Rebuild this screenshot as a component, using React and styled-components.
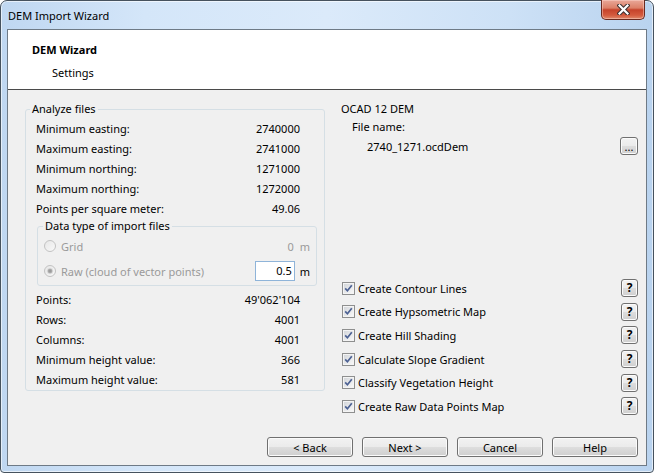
import React from 'react';
import styled, { createGlobalStyle } from 'styled-components';

const GlobalStyle = createGlobalStyle`
  html, body { margin: 0; padding: 0; background: #ffffff; }
  body {
    font-family: "Noto Sans", "Open Sans", "DejaVu Sans", sans-serif;
    font-size: 11px;
    color: #000;
  }
  * { box-sizing: border-box; }
`;

const Window = styled.div`
  width: 654px;
  height: 473px;
  display: flex;
  flex-direction: column;
  border: 1px solid #46525e;
  border-radius: 7px 7px 4px 4px;
  padding: 0 6px 6px 6px;
  background: linear-gradient(90deg, #bfd7f1 0%, #d4e6f9 22%, #dbeafa 50%, #cde1f6 78%, #b9d3ef 100%);
  box-shadow: inset 0 0 0 1px rgba(255, 255, 255, 0.6);
`;

const TitleBar = styled.div`
  height: 28px;
  flex: none;
  display: flex;
  margin: 0 -6px 0 -6px;
  padding: 0 8px 0 7px;
`;

const TitleText = styled.div`
  flex: 1;
  align-self: center;
  font-size: 11px;
  line-height: 16px;
  padding-top: 2px;
`;

const CloseButton = styled.div`
  width: 44px;
  height: 20px;
  margin-top: -1px;
  display: flex;
  align-items: center;
  justify-content: center;
  border: 1px solid #6a2a20;
  border-top: none;
  border-radius: 0 0 5px 5px;
  background: linear-gradient(180deg, #e9a899 0%, #dc8068 42%, #c6432b 52%, #d45a3e 80%, #e08a6c 100%);
  box-shadow: inset 0 0 0 1px rgba(255, 220, 210, 0.45);
`;

const Client = styled.div`
  flex: 1;
  display: flex;
  flex-direction: column;
  background: #f0f0f0;
  border: 1px solid #6e7a86;
  min-height: 0;
`;

const Header = styled.div`
  height: 60px;
  flex: none;
  background: #ffffff;
  border-bottom: 1px solid #4a4a4a;
  padding: 12px 0 0 24px;
`;

const HeaderTitle = styled.div`
  font-weight: bold;
  line-height: 16px;
`;

const HeaderSub = styled.div`
  margin-top: 7px;
  padding-left: 20px;
  line-height: 16px;
`;

const Body = styled.div`
  flex: 1;
  display: grid;
  grid-template-columns: 300px 1fr;
  column-gap: 16px;
  padding: 11px 8px 4px 17px;
  min-height: 0;
`;

const Group = styled.fieldset`
  margin: 0;
  padding: 1px 0 1px 0;
  border: 1px solid #d5dfe5;
  border-radius: 3px;
  min-width: 0;
  align-self: start;
`;

const Legend = styled.legend`
  padding: 0 2px;
  margin-left: ${p => p.$inset}px;
  line-height: 16px;
  color: #000;
`;

const InnerGroup = styled.fieldset`
  margin: 0 7px 0 11px;
  padding: 2px 6px 3px 6px;
  border: 1px solid #d5dfe5;
  border-radius: 3px;
  min-width: 0;
`;

const InfoRow = styled.div`
  height: 20px;
  display: flex;
  align-items: center;
  justify-content: space-between;
  padding: 0 24px 0 10px;
  margin-top: ${p => p.$gap || 0}px;
`;

const RadioRow = styled.div`
  height: ${p => p.$h}px;
  margin-top: ${p => p.$gap || 0}px;
  display: grid;
  grid-template-columns: 1fr 40px auto;
  column-gap: 5px;
  align-items: center;
  color: #9a9a9a;
`;

const RadioLabel = styled.div`
  display: flex;
  align-items: center;
  gap: 5px;
`;

const StaticValue = styled.div`
  text-align: right;
  padding-right: 1px;
`;

const Unit = styled.div`
  color: ${p => (p.$disabled ? '#9a9a9a' : '#000')};
`;

const NumberInput = styled.div`
  height: 20px;
  border: 1px solid #8fb4d9;
  background: #fff;
  color: #000;
  text-align: right;
  padding-right: 2px;
  line-height: 18px;
`;

const RightCol = styled.div`
  display: flex;
  flex-direction: column;
  min-height: 0;
`;

const SectionTitle = styled.div`
  line-height: 16px;
`;

const FieldLabel = styled.div`
  line-height: 20px;
  padding-left: 11px;
`;

const FileRow = styled.div`
  height: 18px;
  display: flex;
  align-items: center;
  justify-content: space-between;
  padding-left: 26px;
`;

const WinButton = styled.div`
  display: flex;
  align-items: center;
  justify-content: center;
  width: ${p => p.$w}px;
  height: ${p => p.$h}px;
  border: 1px solid #707070;
  border-radius: 3px;
  background: linear-gradient(180deg, #f2f2f2 0%, #ebebeb 48%, #dddddd 52%, #cfcfcf 100%);
  box-shadow: inset 0 0 0 1px #fbfbfb;
  font-weight: ${p => (p.$bold ? 'bold' : 'normal')};
  font-size: ${p => (p.$bold ? 12 : 11)}px;
  line-height: 1;
  color: #000;
`;

const CheckList = styled.div`
  margin-top: auto;
  display: flex;
  flex-direction: column;
`;

const CheckRow = styled.div`
  height: 23.6px;
  display: flex;
  align-items: center;
  justify-content: space-between;
`;

const CheckLabel = styled.div`
  display: flex;
  align-items: center;
  gap: 3px;
  padding-left: 1px;
`;

const Footer = styled.div`
  flex: none;
  display: flex;
  justify-content: flex-end;
  gap: 9px;
  padding: 15px 8px 8px 8px;
`;

const CloseGlyph = () => (
  <svg width="13" height="11" viewBox="0 0 13 11">
    <path d="M2.5 1.5 L10.5 9.5 M10.5 1.5 L2.5 9.5" stroke="#3b3030" strokeWidth="4.2" strokeLinecap="square" />
    <path d="M2.5 1.5 L10.5 9.5 M10.5 1.5 L2.5 9.5" stroke="#ffffff" strokeWidth="2.2" strokeLinecap="square" />
  </svg>
);

const Radio = ({ checked }) => (
  <svg width="12" height="12" viewBox="0 0 12 12">
    <defs>
      <linearGradient id={checked ? 'rfOn' : 'rfOff'} x1="0" y1="0" x2="1" y2="1">
        <stop offset="0" stopColor="#e6e6e6" />
        <stop offset="1" stopColor="#fafafa" />
      </linearGradient>
    </defs>
    <circle cx="6" cy="6" r="5.5" fill={`url(#${checked ? 'rfOn' : 'rfOff'})`} stroke="#c2c2c2" />
    {checked && <circle cx="6" cy="6" r="3" fill="#bdbdbd" stroke="#e4e4e4" strokeWidth="0.8" />}
    {checked && <circle cx="6" cy="6" r="1.8" fill="#9c9c9c" />}
  </svg>
);

const CheckBox = () => (
  <svg width="13" height="13" viewBox="0 0 13 13">
    <defs>
      <linearGradient id="cbFill" x1="0" y1="0" x2="1" y2="1">
        <stop offset="0" stopColor="#d4d7db" />
        <stop offset="1" stopColor="#f7f7f7" />
      </linearGradient>
    </defs>
    <rect x="0.5" y="0.5" width="12" height="12" fill="#f4f4f4" stroke="#8e8f8f" />
    <rect x="2" y="2" width="9" height="9" fill="url(#cbFill)" />
    <path d="M3.2 6.4 L5.4 8.8 L9.8 3.2" fill="none" stroke="#4c6193" strokeWidth="1.7" />
  </svg>
);

const stats = [
  ['Minimum easting:', '2740000'],
  ['Maximum easting:', '2741000'],
  ['Minimum northing:', '1271000'],
  ['Maximum northing:', '1272000'],
  ['Points per square meter:', '49.06'],
];

const counts = [
  ['Points:', "49'062'104"],
  ['Rows:', '4001'],
  ['Columns:', '4001'],
  ['Minimum height value:', '366'],
  ['Maximum height value:', '581'],
];

const options = [
  'Create Contour Lines',
  'Create Hypsometric Map',
  'Create Hill Shading',
  'Calculate Slope Gradient',
  'Classify Vegetation Height',
  'Create Raw Data Points Map',
];

export default function App() {
  return (
    <>
      <GlobalStyle />
      <Window>
        <TitleBar>
          <TitleText>DEM Import Wizard</TitleText>
          <CloseButton>
            <CloseGlyph />
          </CloseButton>
        </TitleBar>
        <Client>
          <Header>
            <HeaderTitle>DEM Wizard</HeaderTitle>
            <HeaderSub>Settings</HeaderSub>
          </Header>
          <Body>
            <Group>
              <Legend $inset={4}>Analyze files</Legend>
              {stats.map(([k, v]) => (
                <InfoRow key={k}>
                  <span>{k}</span>
                  <span>{v}</span>
                </InfoRow>
              ))}
              <InnerGroup>
                <Legend $inset={-1}>Data type of import files</Legend>
                <RadioRow $h={20}>
                  <RadioLabel>
                    <Radio />
                    <span>Grid</span>
                  </RadioLabel>
                  <StaticValue>0</StaticValue>
                  <Unit $disabled>m</Unit>
                </RadioRow>
                <RadioRow $h={22} $gap={4}>
                  <RadioLabel>
                    <Radio checked />
                    <span>Raw (cloud of vector points)</span>
                  </RadioLabel>
                  <NumberInput>0.5</NumberInput>
                  <Unit>m</Unit>
                </RadioRow>
              </InnerGroup>
              {counts.map(([k, v], i) => (
                <InfoRow key={k} $gap={i === 0 ? 3 : 0}>
                  <span>{k}</span>
                  <span>{v}</span>
                </InfoRow>
              ))}
            </Group>
            <RightCol>
              <SectionTitle>OCAD 12 DEM</SectionTitle>
              <FieldLabel>File name:</FieldLabel>
              <FileRow>
                <span>2740_1271.ocdDem</span>
                <WinButton $w={18} $h={18}>...</WinButton>
              </FileRow>
              <CheckList>
                {options.map(label => (
                  <CheckRow key={label}>
                    <CheckLabel>
                      <CheckBox />
                      <span>{label}</span>
                    </CheckLabel>
                    <WinButton $w={17} $h={18} $bold>?</WinButton>
                  </CheckRow>
                ))}
              </CheckList>
            </RightCol>
          </Body>
          <Footer>
            <WinButton $w={86} $h={20}>&lt; Back</WinButton>
            <WinButton $w={86} $h={20}>Next &gt;</WinButton>
            <WinButton $w={86} $h={20}>Cancel</WinButton>
            <WinButton $w={86} $h={20}>Help</WinButton>
          </Footer>
        </Client>
      </Window>
    </>
  );
}
